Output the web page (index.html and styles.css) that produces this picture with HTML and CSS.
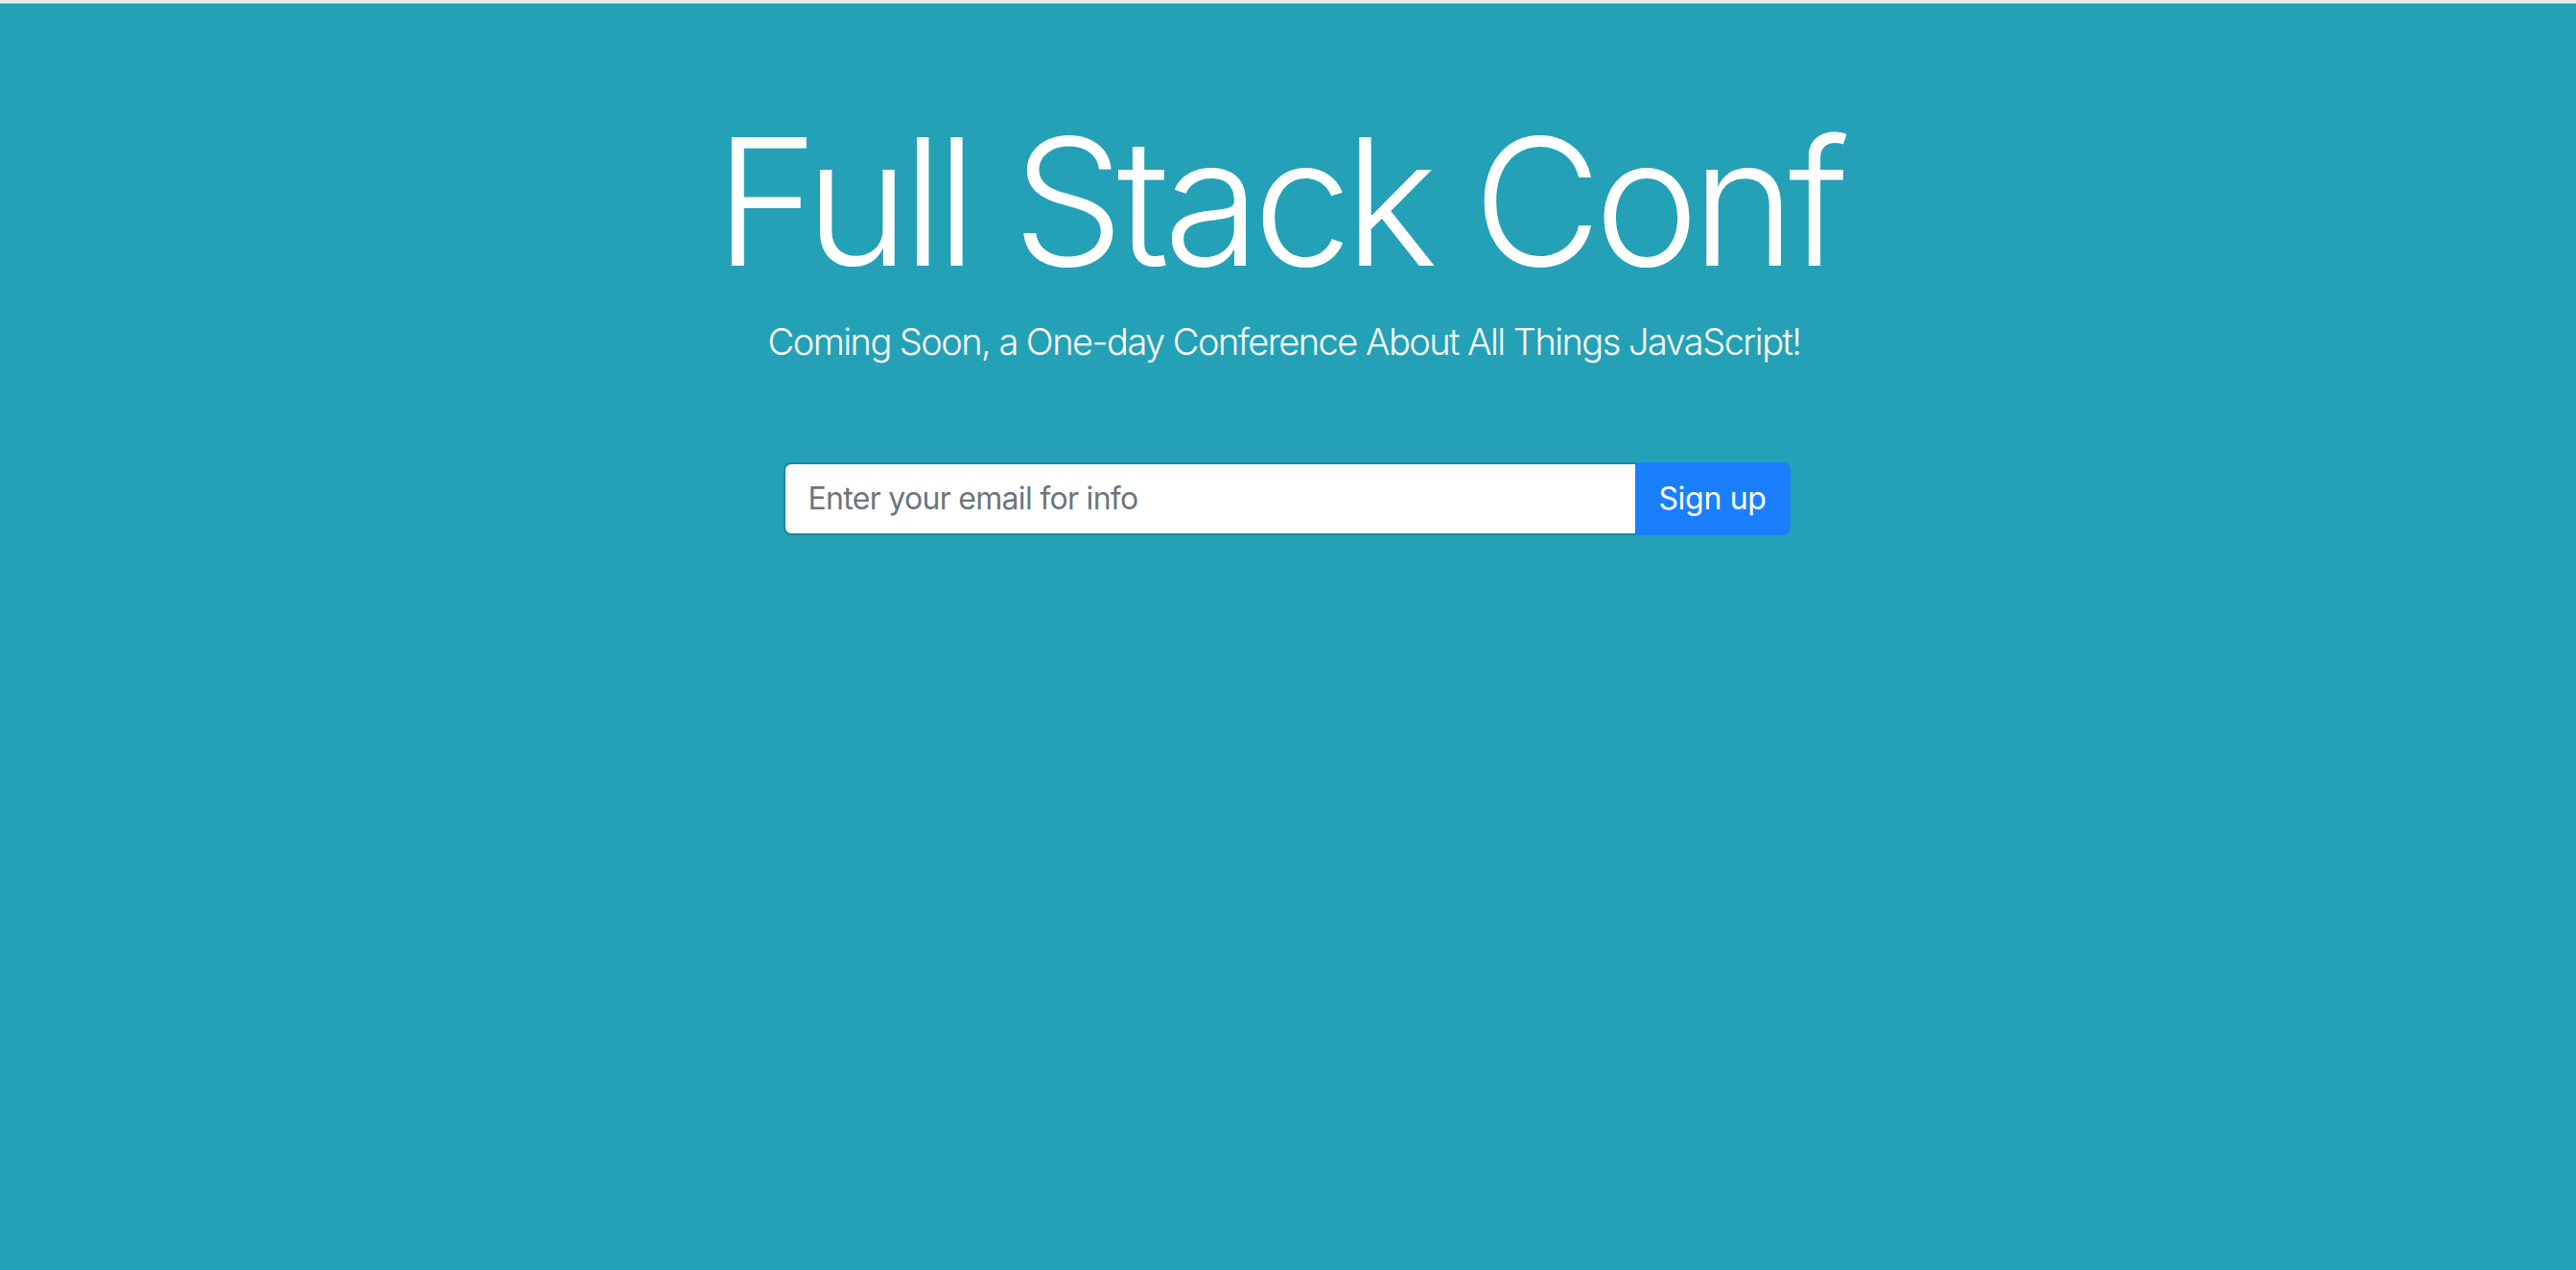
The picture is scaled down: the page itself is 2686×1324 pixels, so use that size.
FILE: index.html
```html
<!DOCTYPE html>
<html lang="en">
<head>
<meta charset="utf-8">
<title>Full Stack Conf</title>
<link rel="stylesheet" href="styles.css">
</head>
<body>
<div class="chrome-strip"></div>
<main class="hero">
  <h1 class="hero-title">Full Stack Conf</h1>
  <p class="hero-lead">Coming Soon, a One-day Conference About All Things JavaScript!</p>
  <form class="signup">
    <input class="signup-input" type="email" placeholder="Enter your email for info">
    <button class="signup-btn" type="button">Sign up</button>
  </form>
</main>
</body>
</html>
```
FILE: styles.css
```css
html, body {
  margin: 0;
  padding: 0;
  height: 100%;
}
body {
  display: flex;
  flex-direction: column;
  font-family: Inter, "Noto Sans", sans-serif;
  background: #24a1b7;
}
.chrome-strip {
  height: 3px;
  background: #ebebeb;
  border-bottom: 1px solid #bdbdbd;
  flex: none;
}
.hero {
  flex: 1;
  display: flex;
  flex-direction: column;
  align-items: center;
  padding-top: 96px;
  color: #fff;
}
.hero-title {
  margin: 0;
  font-size: 184px;
  font-weight: 300;
  line-height: 1.2;
  letter-spacing: -7.5px;
  text-indent: -20px;
}
.hero-lead {
  margin: 7px 0 0;
  font-size: 38px;
  font-weight: 300;
  line-height: 1.5;
  letter-spacing: -1.55px;
  text-indent: -8px;
}
.signup {
  display: flex;
  margin: 97px 3px 0 0;
  width: 1050px;
  height: 76px;
}
.signup-input {
  flex: 1;
  box-sizing: border-box;
  height: 76px;
  margin: 0;
  padding: 0 24px;
  border: 2px solid #1b8a9b;
  border-right: none;
  border-radius: 8px 0 0 8px;
  font-family: Inter, "Noto Sans", sans-serif;
  font-size: 32px;
  color: #495057;
  background: #fff;
  outline: none;
  letter-spacing: -0.7px;
}
.signup-input::placeholder {
  color: #6c757d;
}
.signup-btn {
  flex: none;
  width: 162px;
  height: 76px;
  margin: 0;
  border: none;
  border-radius: 0 8px 8px 0;
  background: #1a7fff;
  color: #fff;
  font-family: Inter, "Noto Sans", sans-serif;
  font-size: 32px;
  font-weight: 400;
  letter-spacing: -0.3px;
}
```
